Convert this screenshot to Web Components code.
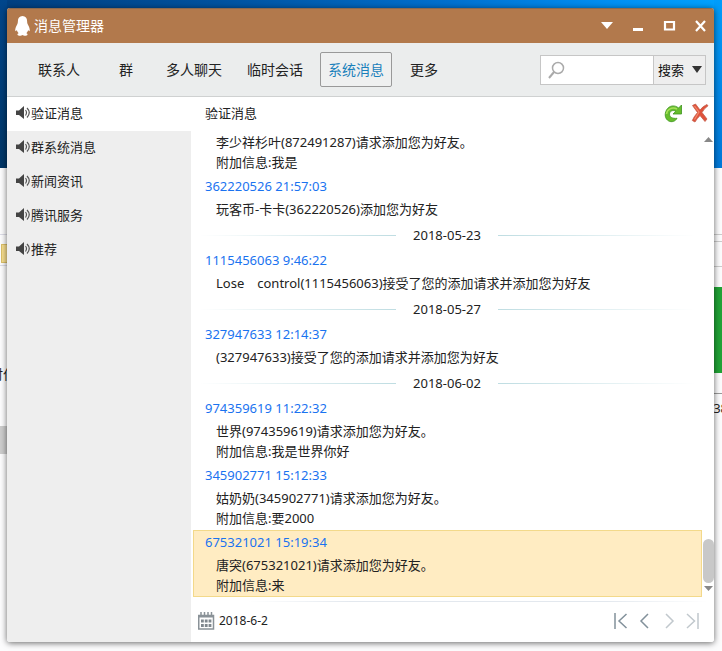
<!DOCTYPE html>
<html lang="zh-CN">
<head>
<meta charset="utf-8">
<title>消息管理器</title>
<style>
html,body{height:100%}
body{margin:0;overflow:hidden;font:13px/20px "Noto Sans","Noto Sans CJK SC",sans-serif;color:#222}
</style>
</head>
<body>
<qq-desktop>
  <message-manager>
    <title-bar slot="title">消息管理器</title-bar>
    <tool-bar slot="tools">
      <tool-tab wide>联系人</tool-tab><tool-tab>群</tool-tab><tool-tab>多人聊天</tool-tab><tool-tab>临时会话</tool-tab><tool-tab active>系统消息</tool-tab><tool-tab>更多</tool-tab>
    </tool-bar>
    <side-nav slot="side">
      <side-item active>验证消息</side-item><side-item>群系统消息</side-item><side-item>新闻资讯</side-item><side-item>腾讯服务</side-item><side-item>推荐</side-item>
    </side-nav>
    <pane-head slot="main">验证消息</pane-head>
    <message-list slot="main">
      <message-item>李少祥杉叶(872491287)请求添加您为好友。<br>附加信息:我是</message-item>
      <message-item head="362220526 21:57:03">玩客币-卡卡(362220526)添加您为好友</message-item>
      <date-line>2018-05-23</date-line>
      <message-item head="1115456063 9:46:22">Lose　control(1115456063)接受了您的添加请求并添加您为好友</message-item>
      <date-line>2018-05-27</date-line>
      <message-item head="327947633 12:14:37">(327947633)接受了您的添加请求并添加您为好友</message-item>
      <date-line>2018-06-02</date-line>
      <message-item head="974359619 11:22:32">世界(974359619)请求添加您为好友。<br>附加信息:我是世界你好</message-item>
      <message-item head="345902771 15:12:33">姑奶奶(345902771)请求添加您为好友。<br>附加信息:要2000</message-item>
      <message-item head="675321021 15:19:34" selected>唐突(675321021)请求添加您为好友。<br>附加信息:来</message-item>
    </message-list>
    <pane-foot slot="main">2018-6-2</pane-foot>
  </message-manager>
</qq-desktop>
<script>
const reset = `*{box-sizing:border-box}button{font:inherit;color:inherit;background:none;border:0;padding:0;margin:0}svg{display:block}`;
function define(name, css, html, setup) {
  const t = document.createElement('template');
  t.innerHTML = `<style>${reset}${css}</style>${html}`;
  customElements.define(name, class extends HTMLElement {
    constructor() {
      super();
      this.attachShadow({mode: 'open'}).append(t.content.cloneNode(true));
      if (setup) setup(this, this.shadowRoot);
    }
  });
}

define('qq-desktop', `
:host{display:flex;position:relative;height:100vh;padding:8px 8px 9px 7px;overflow:hidden;background:#fcfcfd;box-sizing:border-box}
.sky{position:absolute;inset:0 0 auto 0;height:168px;background:linear-gradient(90deg,#003f80 0,#00529f 30%,#0070cf 62%,#0090f4 85%,#00a2ff 100%)}
.shade{position:absolute;left:0;top:0;width:7px;height:168px;background:linear-gradient(#00468c,#003666)}
.shade.r{left:auto;right:0;width:8px;background:linear-gradient(#009dfb,#0078d8)}
.bit{position:absolute;color:#222;white-space:nowrap}
::slotted(*){flex:1;position:relative}
`, `
<div class="sky"></div><div class="shade"></div><div class="shade r"></div>
<div class="bit" style="left:0;width:8px;top:234px;height:32px;border:solid #dcdce6;border-width:1px 0"></div>
<div class="bit" style="left:1px;width:7px;top:244px;height:19px;background:#f7de8e;border:1px solid #dcc069"></div>
<div class="bit" style="right:0;width:8px;top:234px;height:33px;border:solid #ccc;border-width:1px 0"></div>
<div class="bit" style="right:0;width:8px;top:241px;height:1px;background:#ccc"></div>
<div class="bit" style="right:0;width:8px;top:287px;height:86px;background:#21a336"></div>
<div class="bit" style="right:0;width:8px;top:393px;height:1px;background:#999"></div>
<div class="bit" style="left:0;width:8px;top:426px;height:28px;background:#ccc"></div>
<div class="bit" style="left:-10px;top:364px">时付</div>
<div class="bit" style="right:-6px;top:398px">38</div>
<slot></slot>`);

define('message-manager', `
:host{display:flex;flex-direction:column;min-width:0;background:#fff;border-radius:3px;box-shadow:0 1px 6px rgba(0,0,0,.6)}
.cols{flex:1;display:flex;min-height:0}
main{flex:1;min-width:0;display:flex;flex-direction:column;background:#fff;border-radius:0 0 3px 0}
`, `<slot name="title"></slot><slot name="tools"></slot><div class="cols"><slot name="side"></slot><main><slot name="main"></slot></main></div>`);

define('title-bar', `
:host{display:flex;align-items:center;height:35px;flex:none;padding:0 7px 0 8px;background:#b2794c;color:#fff;font-size:14px;border-radius:3px 3px 0 0;border-top:1px solid #8e6a4e;box-sizing:border-box}
.name{flex:1;padding-left:4px}
.win{display:flex;gap:17px}
button{width:14px;height:14px}
`, `
<svg width="15" height="20" viewBox="0 0 15 20" fill="#fff"><path d="M7.500 0C4.500 0 2.900 2.200 2.900 5C2.900 6.600 2.700 7.400 1.900 8.900C.8 10.900 0 13 .3 14.700C.5 15.700 1.300 14.900 1.900 14C2.100 15.300 2.800 16.400 3.700 17.200C2.500 17.600 2.300 18.300 2.600 19C3.200 20 6.500 20 7.500 19C8.500 20 11.800 20 12.400 19C12.700 18.300 12.500 17.600 11.300 17.200C12.200 16.400 12.900 15.300 13.100 14C13.700 14.900 14.500 15.700 14.700 14.700C15 13 14.200 10.900 13.100 8.900C12.300 7.400 12.100 6.600 12.100 5C12.100 2.200 10.500 0 7.500 0Z"/></svg>
<span class="name"><slot></slot></span>
<div class="win">
<button aria-label="菜单"><svg width="14" height="14"><path d="M1 3H13L7 10Z" fill="#fff"/></svg></button>
<button aria-label="最小化"><svg width="14" height="14"><path d="M2 9H12V12H2Z" fill="#fff"/></svg></button>
<button aria-label="最大化"><svg width="14" height="14"><path d="M3 3H12V10.500H3Z" fill="none" stroke="#fff" stroke-width="2.200"/></svg></button>
<button aria-label="关闭"><svg width="14" height="14"><path d="M3 2L12 12M12 2L3 12" stroke="#fff" stroke-width="2.200"/></svg></button>
</div>`);

define('tool-bar', `
:host{display:flex;align-items:center;justify-content:space-between;height:54px;flex:none;padding:0 8px 0 17px;background:#ebeded;border-bottom:1px solid #cfd1d1;box-sizing:border-box}
nav{display:flex;gap:9px}
.search{display:flex;height:30px;width:166px;border:1px solid #c6c6c6;background:#fff}
label{flex:1;display:flex;align-items:center;min-width:0;padding-left:6px}
input{width:0;flex:1;border:0;outline:0;background:none;font:inherit}
.go{display:flex;align-items:center;gap:8px;padding:0 3px 0 4px;background:#eee;border-left:1px solid #c6c6c6;color:#111}
`, `<nav><slot></slot></nav>
<div class="search"><label><svg width="20" height="20" fill="none" stroke="#aaa"><circle cx="11" cy="8" r="5.500" stroke-width="1.500"/><path d="M7 12L2 18" stroke-width="2"/></svg><input aria-label="搜索"></label>
<button class="go">搜索<svg width="10" height="8"><path d="M0 0H10L5 7Z" fill="#333"/></svg></button></div>`);

define('tool-tab', `
:host{display:block}
button{height:35px;min-width:46px;padding:0 7px;border:1px solid transparent;border-radius:2px;font-size:14px;color:#222;white-space:nowrap}
:host([wide]) button{min-width:70px}
:host([active]) button{color:#1a80bb;border-color:#999;background:#eff0f0}
`, `<button><slot></slot></button>`);

define('side-nav', `:host{display:block;flex:none;width:184px;background:#eee;border-radius:0 0 0 3px}`, `<nav><slot></slot></nav>`);

define('side-item', `
:host{display:block}
button{display:flex;align-items:center;width:100%;height:34px;padding:0 0 2px 9px;color:#222}
:host([active]) button{background:#fff}
`, `<button><svg width="15" height="14"><path d="M0 4.500H3L8 0V13L3 9H0Z" fill="#444"/><path d="M9.500 4Q11.500 6.500 9.500 9.500M11 2Q15.500 6.500 11 11.500" fill="none" stroke="#555" stroke-width="1.200"/></svg><slot></slot></button>`);

define('pane-head', `
:host{display:flex;align-items:center;justify-content:space-between;height:34px;flex:none;padding:0 5px 2px 14px;box-sizing:border-box}
div{display:flex;gap:8px}
`, `<slot></slot><div>
<button aria-label="刷新"><svg width="20" height="20" viewBox="0 0 20 20"><path d="M18.500 2V11H10L12.800 8.300C9.800 6.500 6.500 8.200 6.500 11.200C6.500 14.200 9.500 15.800 14 15.300C12.500 18.500 8.500 19.500 5.700 18C2 16 1.200 11 3.500 7C6 2.500 11.500 1.500 15.600 5Z" fill="#66bd2c" stroke="#3d9420" stroke-width=".8"/><path d="M3.500 11C4 6.500 9 3.500 14 6" fill="none" stroke="#a7e05a" stroke-width="1.600"/></svg></button>
<button aria-label="删除"><svg width="18" height="20" viewBox="0 0 18 20"><path d="M1.500 2.500L4.500 1L9 7Q12 3 16 1.500L17 2.800Q13.500 5 11 9.500L16 16L14 18.500L9 12.500Q6 15.500 4 19L1.300 17.500Q3 13.500 6.500 9.500Z" fill="#e0513a" stroke="#c4604d" stroke-width=".8"/><path d="M3.500 3L8 9L3.500 16.500" fill="none" stroke="#f18a6c" stroke-width="1.200"/></svg></button></div>`);

define('message-list', `
:host{display:flex;flex:1;min-height:0;overflow:hidden}
.items{flex:1;min-width:0;padding-left:2px}
.bar{display:flex;flex-direction:column;align-items:center;width:12px;padding:6px 0 7px}
.track{flex:1;display:flex;flex-direction:column;justify-content:flex-end;width:11px;padding-bottom:3px}
.thumb{height:44px;border-radius:6px;background:#c8c8c8}
`, `<div class="items"><slot></slot></div><div class="bar"><svg width="9" height="5"><path d="M0 5H9L4.500 0Z" fill="#888"/></svg><div class="track"><div class="thumb"></div></div><svg width="9" height="5"><path d="M0 0H9L4.500 5Z" fill="#888"/></svg></div>`);

define('message-item', `
:host{display:block;border:solid transparent;border-width:0 1px;padding:0 11px}
:host([selected]){background:#ffecc2;border-color:#f3d98a;box-shadow:inset 0 1px #f3d98a,inset 0 -1px #f3d98a}
h3{margin:0;font:inherit;line-height:24px;color:#1a73f0}
p{margin:0;padding:1px 0 2px 11px}
`, `<h3></h3><p><slot></slot></p>`, (el, root) => {
  const h = root.querySelector('h3');
  if (el.hasAttribute('head')) h.textContent = el.getAttribute('head'); else h.remove();
});

define('date-line', `
:host{display:flex;align-items:center;gap:17px;height:27px;padding:1px 7px 0 6px;box-sizing:border-box}
i{flex:1;height:1px;background:linear-gradient(90deg,#fff,#bfdde2)}
i+span+i{background:linear-gradient(270deg,#fff,#bfdde2)}
`, `<i></i><span><slot></slot></span><i></i>`);

define('pane-foot', `
:host{display:block;flex:none;padding:3px 6px 0}
hr{height:1px;margin:0;border:0;background:linear-gradient(90deg,#fff 10%,#e3e8ee 30%,#e3e8ee 80%,#fff)}
div{display:flex;align-items:center}
.row{height:40px;justify-content:space-between;padding:0 7px 2px 1px}
.date{display:flex;align-items:center;gap:4px;font-size:12px}
.pages{gap:8px}
svg{fill:none;stroke-width:1.500}
`, `<hr><div class="row"><button class="date"><svg width="17" height="18"><path d="M.75 3.500H15.500V17H.75Z" stroke="#8a9298"/><path d="M1 4.500H16" stroke="#8a9298" stroke-width="2"/><path d="M3 0V3M6.500 0V3M10 0V3M13.500 0V3" stroke="#8a9298"/><path d="M3 9H13.500M3 13.500H13.500" stroke="#7f878d" stroke-width="3" stroke-dasharray="2.800 1"/></svg><slot></slot></button>
<div class="pages">
<button aria-label="第一页"><svg width="16" height="18" stroke="#82919b"><path d="M2 1V17M13.500 2L6 9L13.500 16"/></svg></button>
<button aria-label="上一页"><svg width="16" height="18" stroke="#82919b"><path d="M11 2L4 9L11 16"/></svg></button>
<button aria-label="下一页" disabled><svg width="16" height="18" stroke="#c1c8cd"><path d="M5 2L12 9L5 16"/></svg></button>
<button aria-label="最后一页" disabled><svg width="16" height="18" stroke="#c1c8cd"><path d="M2 2L9.500 9L2 16M13 1V17"/></svg></button>
</div></div>`);
</script>
</body>
</html>
